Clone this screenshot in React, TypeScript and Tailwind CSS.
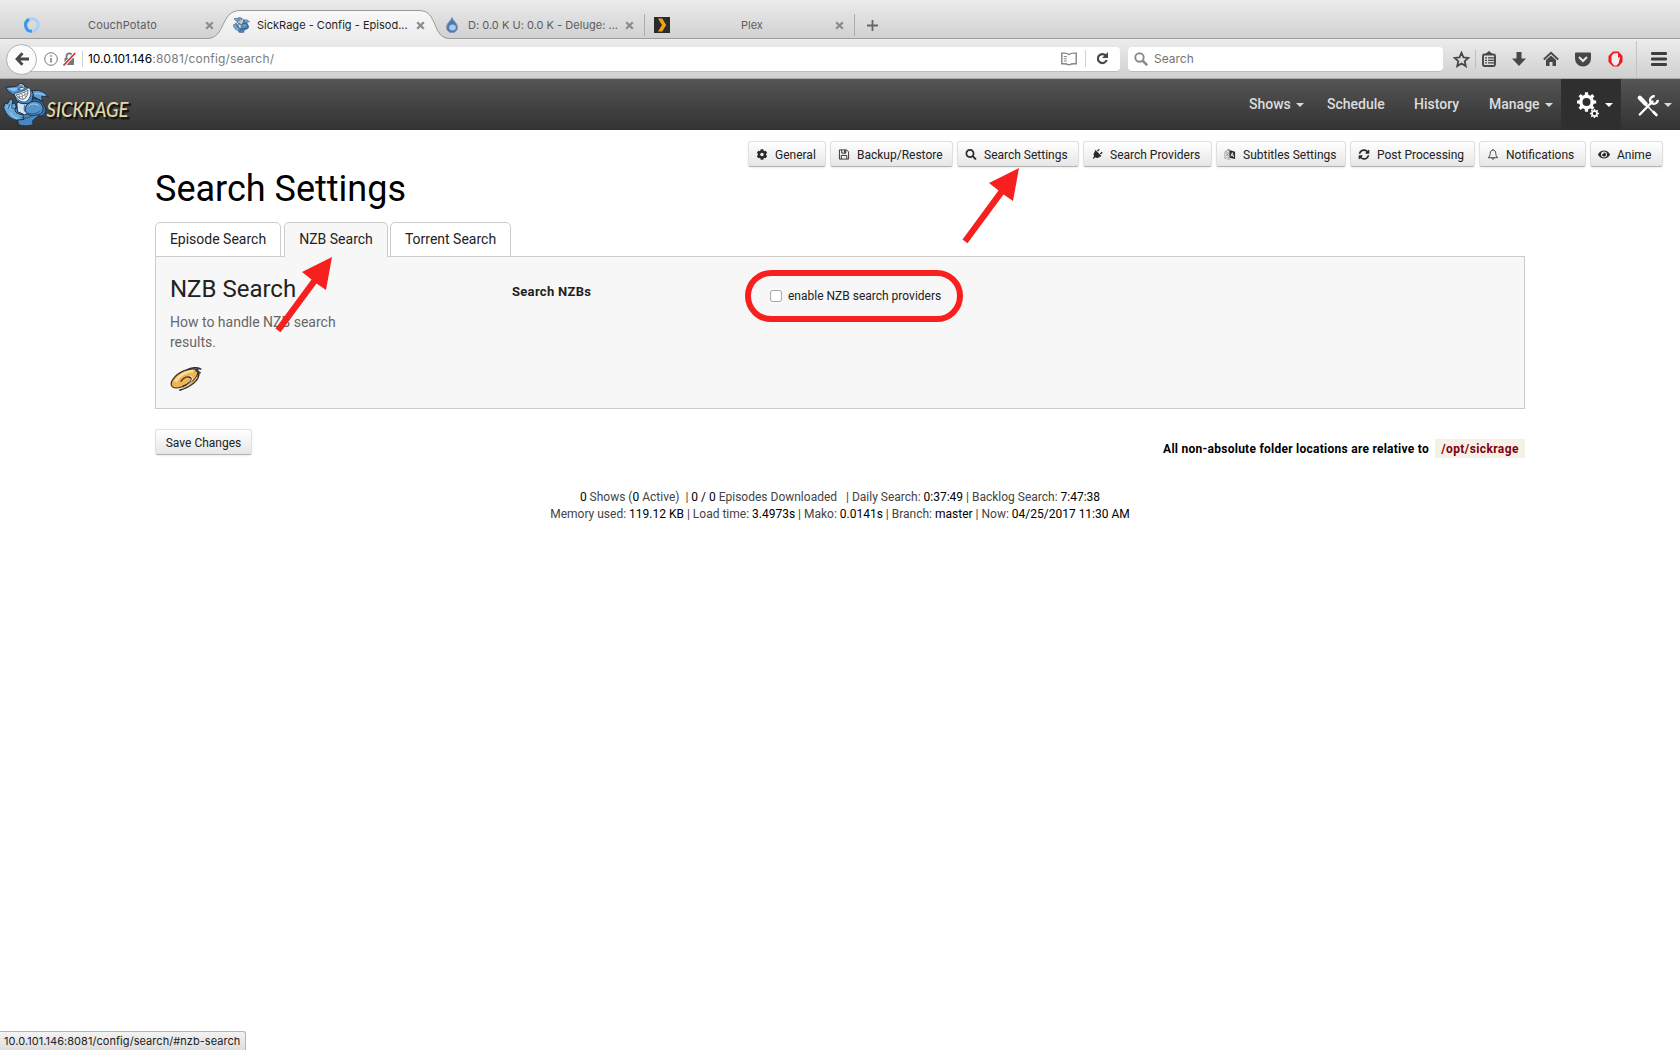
import React from "react";
import { FaCog, FaEye, FaPlug, FaSearch, FaSyncAlt } from "react-icons/fa";

function gearPath(cx: number, cy: number, outer: number, inner: number, hole: number, teeth: number) {
  const pts: string[] = [];
  const step = (Math.PI * 2) / teeth;
  for (let i = 0; i < teeth; i++) {
    const a = i * step - Math.PI / 2;
    const at = (r: number, t: number) =>
      `${(cx + r * Math.cos(t)).toFixed(2)} ${(cy + r * Math.sin(t)).toFixed(2)}`;
    pts.push(at(inner, a - step * 0.3), at(outer, a - step * 0.2), at(outer, a + step * 0.2), at(inner, a + step * 0.3));
  }
  return `M${pts.join("L")}Z M${cx - hole} ${cy}a${hole} ${hole} 0 1 0 ${hole * 2} 0a${hole} ${hole} 0 1 0 ${-hole * 2} 0Z`;
}

function Shark({ className }: { className: string }) {
  return (
    <svg className={className} viewBox="8 17 140 134" fill="none">
      <g stroke="#1a2a42" strokeWidth="3" strokeLinejoin="round">
        {/* tail, back arm and legs */}
        <path fill="#5f9dd0" d="M96 42c16-6 38-2 50 18-8-4-14-4-20-2l2 14-14-6-14-8z" />
        <path fill="#3f76ae" d="M92 66c18-4 34 4 42 20 8 14 4 26-6 30-8 4-18 4-26 2z" />
        <path fill="#4b86be" d="M24 106l26 18 6 20c14 6 30 4 44 0l-2-12 20-16-20-24-40-4z" />
        {/* chest */}
        <path fill="#cde6f4" d="M50 78l36-20 12 16-4 30-20 10-22-10z" />
        {/* front arm */}
        <path fill="#5593c9" d="M80 84c10-16 38-16 48 2 6 16-2 26-16 28-14 4-28 2-34-8-4-8-2-16 2-22z" />
        {/* raised fist */}
        <path fill="#6ba8da" d="M10 92l4-14 8 2 8-14 8 2-2 12 8-2 4 10-4 12c2 8 10 12 24 14l4 14-24 2c-16-4-30-14-38-38z" />
        {/* head */}
        <path fill="#4f8fc8" d="M16 30l30-2 12-8 12 0 4 8c14 4 24 12 26 24l-4 20-12 8-16 0C52 78 46 66 42 54 30 48 20 42 16 30z" />
      </g>
      <path d="M20 33l26-2 16 4-22 8z" fill="#8dc1e8" />
      <path d="M42 49c14-2 32-8 46-18 8 14 4 34-10 43-16 4-30-8-36-25z" fill="#e9f5fb" stroke="#1a2a42" strokeWidth="2" />
      <path d="M48 53c12-2 26-8 36-14 0 12-4 22-12 27-10 2-18-4-24-13z" fill="#fff" stroke="#1a2a42" strokeWidth="2" />
      <path d="M52 60c12 0 22-6 31-13M56 52l4 14M65 49l3 17M74 44l2 17" stroke="#42566e" strokeWidth="1.800" />
      <path d="M52 36l14-6 8 3-8 6z" fill="#f3f7f8" stroke="#1a2a42" strokeWidth="2" />
      <path d="M58 22l10 1 4 8" stroke="#e9d49c" strokeWidth="3" />
      <path d="M86 88c6-8 20-10 30-2M18 90c6-2 12-2 18 2M104 50c12-2 24 0 32 6M30 106c6 10 12 16 24 20" stroke="#a8d4f2" strokeWidth="3" />
      <path d="M84 108c14 6 30 2 38-8M62 122c12 4 24 2 34-6M34 92l10 4M28 82l-4 12M36 80l-2 12M74 84c-2 8-2 14 0 20" stroke="#20466f" strokeWidth="2.500" />
    </svg>
  );
}

function TabClose() {
  return (
    <svg className="h-[9px] w-[9px] shrink-0" viewBox="0 0 9 9">
      <path d="M1.200 1.200l6.600 6.600M7.800 1.200L1.200 7.800" stroke="#8b8b8b" strokeWidth="2.200" />
    </svg>
  );
}

function Caret({ className = "" }: { className?: string }) {
  return <span className={`h-0 w-0 border-x-4 border-t-4 border-x-transparent border-t-[#dcdcdc] ${className}`} />;
}

function TabStrip() {
  return (
    <div className="relative flex h-[39px] border-b border-[#9c9c9c] bg-linear-to-b from-[#ebebeb] to-[#d1d1d1] pt-[10px] text-[11px] text-[#5c5c5c]">
      <div className="flex h-[30px] w-[215px] items-center pl-6">
        <svg className="h-4 w-4" viewBox="0 0 16 16" fill="none">
          <circle cx="8" cy="8" r="6.300" stroke="#a9d0f5" strokeWidth="3" />
          <path d="M8 14.300A6.300 6.300 0 0 1 5 2.400" stroke="#3b97ee" strokeWidth="3" />
        </svg>
        <span className="ml-[48px] w-[117px] tracking-[0.15px]">CouchPotato</span>
        <TabClose />
      </div>
      <div className="relative flex h-[30px] w-[231px] items-center">
        <svg className="absolute -left-2 top-0 h-[30px] w-[246px]" viewBox="0 0 246 30">
          <defs>
            <linearGradient id="activeTab" x1="0" y1="0" x2="0" y2="1">
              <stop offset="0" stopColor="#f8f8f8" />
              <stop offset="1" stopColor="#ececec" />
            </linearGradient>
          </defs>
          <path d="M0 28.5C19 28.5 13 .5 33 .5H212C232 .5 224 28.5 243 28.5V30H0Z" fill="url(#activeTab)" />
          <path d="M0 28.5C19 28.5 13 .5 33 .5H212C232 .5 224 28.5 243 28.5" fill="none" stroke="#999" />
        </svg>
        <Shark className="relative ml-[18px] h-4 w-[17px]" />
        <span className="relative ml-[7px] w-[159px] whitespace-nowrap tracking-[0.02px] text-[#1f1f1f]">
          SickRage - Config - Episod...
        </span>
        <span className="relative flex">
          <TabClose />
        </span>
      </div>
      <div className="flex h-[30px] w-[198px] items-center">
        <svg className="h-4 w-3" viewBox="0 0 12 16">
          <path d="M6 .5C7 4 11.500 6 11.500 10.500a5.500 5.200 0 0 1-11 0C.5 6 5 4 6 .5z" fill="#4d79ae" stroke="#7d99bb" />
          <ellipse cx="6.500" cy="10.500" rx="3.400" ry="3" fill="#a9c9e6" />
        </svg>
        <span className="ml-[10px] w-[157px] whitespace-nowrap tracking-[0.02px]">D: 0.0 K U: 0.0 K - Deluge: ...</span>
        <TabClose />
      </div>
      <div className="mt-[4px] h-[22px] w-px bg-[#acacac]" />
      <div className="flex h-[30px] w-[209px] items-center pl-[9px]">
        <svg className="h-4 w-4" viewBox="0 0 16 16">
          <path fill="#2b2b2b" d="M0 0h16v16H0z" />
          <path fill="#f0a31a" d="M4 1.500h4.200L12.200 8l-4 6.500H4L8 8z" />
        </svg>
        <span className="ml-[71px] w-[94px]">Plex</span>
        <TabClose />
      </div>
      <div className="mt-[4px] h-[22px] w-px bg-[#acacac]" />
      <svg className="ml-[12px] mt-[10px] h-[11px] w-[11px]" viewBox="0 0 11 11">
        <path d="M5.500 0v11M0 5.500h11" stroke="#666" strokeWidth="1.800" />
      </svg>
    </div>
  );
}

function Cell({ w, children }: { w: string; children: React.ReactNode }) {
  return <div className={`flex shrink-0 items-center justify-center ${w}`}>{children}</div>;
}

function AddressBar() {
  return (
    <div className="flex h-10 items-center border-b border-[#a9a9a9] bg-linear-to-b from-[#ececec] to-[#d0d0d0] text-[12px]">
      <div className="relative z-10 ml-[6px] mt-px flex h-[31px] w-[31px] items-center justify-center rounded-full border border-[#b0b0b0] bg-[#fbfbfb]">
        <svg className="h-[14px] w-[14px]" viewBox="0 0 14 14" fill="none" stroke="#474747" strokeWidth="2.800">
          <path d="M7.500 1.200L2 7l5.500 5.800M2.500 7H14" />
        </svg>
      </div>
      <div className="-ml-2 mt-px flex h-[25px] w-[1091px] items-center rounded-r-[4px] border-b border-[#bdbdbd] bg-white">
        <svg className="ml-[15px] h-[14px] w-[14px]" viewBox="0 0 14 14" fill="none" stroke="#777">
          <circle cx="7" cy="7" r="6.300" />
          <path d="M7 6v4.600M7 3.300v1.500" strokeWidth="1.500" />
        </svg>
        <svg className="ml-[5px] h-[14px] w-[13px]" viewBox="0 0 13 14" fill="none">
          <path fill="#777" d="M1.500 6h9.500v7H1.500z" />
          <path d="M3.500 6V4.200a2.700 2.700 0 0 1 5.500 0V6" stroke="#777" strokeWidth="1.700" />
          <path d="M.8 13.400L12.400 1" stroke="#fff" strokeWidth="3.400" />
          <path d="M.5 13.500L12.300 1" stroke="#e0332c" strokeWidth="1.700" />
        </svg>
        <div className="ml-[6px] h-4 w-px bg-[#d0d0d0]" />
        <div className="ml-[5px] whitespace-nowrap pt-px text-[#7b7b7b]">
          <span className="tracking-[-0.05px] text-black">10.0.101.146</span>
          <span className="tracking-[0.2px]">:8081/config/search/</span>
        </div>
        <div className="ml-auto flex items-center">
          <svg className="h-[14px] w-4" viewBox="0 0 16 14" fill="none" stroke="#858585" strokeWidth="1.400">
            <path d="M8 2.500C6 1 3 1 .8 1.200v10.600c2.500-.2 5.200 0 7.200 1.200 2-1.200 4.700-1.400 7.200-1.200V1.200C13 1 10 1 8 2.500z" />
            <path d="M2.800 4.500h3M2.800 6.800h3M2.800 9h3" strokeWidth="1.100" />
          </svg>
          <div className="ml-[8px] h-[17px] w-px bg-[#d0d0d0]" />
          <svg className="ml-[10px] mr-[11px] h-[13px] w-[13px]" viewBox="0 0 13 13" fill="none">
            <path d="M9.600 3.400A4.500 4.500 0 1 0 10.700 8" stroke="#474747" strokeWidth="2.200" />
            <path fill="#474747" d="M12 0v6H6z" />
          </svg>
        </div>
      </div>
      <div className="ml-2 mt-px flex h-[25px] w-[315px] items-center rounded-[4px] border-b border-[#bdbdbd] bg-white">
        <svg className="ml-[6px] h-[14px] w-[14px]" viewBox="0 0 14 14" fill="none" stroke="#8a8a8a">
          <circle cx="5.500" cy="5.500" r="4.200" strokeWidth="1.900" />
          <path d="M8.800 8.800l4.400 4.400" strokeWidth="2.600" />
        </svg>
        <span className="ml-[6px] pt-px text-[#757575]">Search</span>
      </div>
      <div className="flex grow items-center pl-[9px] pt-px">
        <Cell w="w-[18px]">
          <svg className="h-[17px] w-[17px]" viewBox="0 0 17 17" fill="none" stroke="#474747" strokeWidth="1.800">
            <path d="M8.500 1.800l2 4.600 4.900.5-3.700 3.300 1.100 4.900-4.300-2.600-4.300 2.600 1.100-4.900L1.600 6.900l4.900-.5z" />
          </svg>
        </Cell>
        <Cell w="w-[11px]"><span className="h-[18px] w-px bg-[#bdbdbd]" /></Cell>
        <Cell w="w-[16px]">
          <svg className="h-4 w-[14px]" viewBox="0 0 14 16" fill="none" stroke="#474747">
            <rect x="1" y="3.500" width="12" height="11.500" rx="1.500" strokeWidth="1.900" />
            <path d="M4 3l3-2.500L10 3z" fill="#474747" />
            <path d="M3 6.800h2M6 6.800h6M3 9.300h2M6 9.300h6M3 11.800h2M6 11.800h6" strokeWidth="1.200" />
          </svg>
        </Cell>
        <Cell w="w-[44px]">
          <svg className="h-[14px] w-[14px]" viewBox="0 0 14 14" fill="#474747">
            <path d="M4.500 0h5v6.500H14l-7 7.500-7-7.500h4.500z" />
          </svg>
        </Cell>
        <Cell w="w-[20px]">
          <svg className="h-4 w-4" viewBox="0 0 16 16">
            <path d="M.8 8.500L8 1.800l7.200 6.700" fill="none" stroke="#474747" strokeWidth="1.900" />
            <path d="M3 9l5-4.600L13 9v6H9.500v-4h-3v4H3z" fill="#474747" />
          </svg>
        </Cell>
        <Cell w="w-[44px]">
          <svg className="h-[15px] w-4" viewBox="0 0 16 15">
            <path d="M1.500.5h13A1.300 1.300 0 0 1 16 2v4.500a8 8 0 0 1-16 0V2A1.300 1.300 0 0 1 1.500.5z" fill="#474747" />
            <path d="M4 5l4 4 4-4" fill="none" stroke="#e8e8e8" strokeWidth="2" />
          </svg>
        </Cell>
        <Cell w="w-[20px]">
          <svg className="h-4 w-[15px]" viewBox="0 0 15 16">
            <path d="M5 .5h5.500L14.500 5v6l-4 4.500H5L.5 11V5z" fill="#f01822" />
            <path d="M5.500 2.500l4.500-.5v5.500l1-1.500 1 .5-1.500 6-2 2H6L3.500 11V5z" fill="#f3eeee" />
          </svg>
        </Cell>
        <div className="ml-[11px] h-[37px] w-px bg-[#c2c2c2]" />
        <Cell w="w-[43px]">
          <svg className="h-4 w-4" viewBox="0 0 16 16">
            <path d="M1.300 2.500h13.400M1.300 8h13.400M1.300 13.500h13.400" stroke="#3d3d3d" strokeWidth="2.800" strokeLinecap="round" />
          </svg>
        </Cell>
      </div>
    </div>
  );
}

function NavBar() {
  return (
    <header className="flex h-[51px] items-stretch bg-linear-to-b from-[#555] to-[#333] text-[14px] font-medium text-[#dddddd]">
      <div className="flex grow items-center">
        <Shark className="ml-[3px] h-[44px] w-[46px]" />
        <svg className="-ml-[10px] mt-[9px] h-[40px] w-[106px]" viewBox="0 0 106 40">
          <g fontFamily="Lato" fontStyle="italic" fontSize="22">
            <text x="9.500" y="29.500" textLength="82" lengthAdjust="spacingAndGlyphs" fill="#171717" stroke="#171717">
              SICKRAGE
            </text>
            <text x="7.500" y="27.500" textLength="82" lengthAdjust="spacingAndGlyphs" fill="#e2d8a8">
              SICKRAGE
            </text>
          </g>
        </svg>
      </div>
      <div className="flex w-[78px] items-center">Shows<Caret className="ml-[5px]" /></div>
      <div className="flex w-[87px] items-center">Schedule</div>
      <div className="flex w-[75px] items-center">History</div>
      <div className="flex w-[72px] items-center">Manage<Caret className="ml-[5px]" /></div>
      <div className="flex w-[60px] items-center bg-[#2f2f2f] pl-4">
        <svg className="mt-[2px] h-[27px] w-[23px]" viewBox="0 0 23 27" fill="#fff" fillRule="evenodd">
          <path d={gearPath(9.5, 10, 9.8, 7.4, 4, 8)} />
          <path d={gearPath(17.5, 21.5, 4.6, 3.4, 1.7, 8)} />
        </svg>
        <Caret className="ml-[5px] border-t-white" />
      </div>
      <div className="flex w-[59px] items-center pl-4">
        <svg className="mt-[2px] h-[22px] w-[22px]" viewBox="0 0 22 22" fill="none" stroke="#fff">
          <path d="M2.800 2.800l5.700 6" strokeWidth="4.200" strokeLinecap="round" />
          <path d="M8 8.500L19 20" strokeWidth="1.500" />
          <path d="M16.500 17l3 3" strokeWidth="2.600" strokeLinecap="round" />
          <path d="M2.800 19.500L15.500 6.500" strokeWidth="2.400" strokeLinecap="round" />
          <path d="M17.800 1.400a3.800 3.800 0 1 0 2.900 3.500" strokeWidth="2.400" />
        </svg>
        <Caret className="ml-[5px]" />
      </div>
    </header>
  );
}

type IconProps = { className?: string };

function FloppyIcon({ className }: IconProps) {
  return (
    <svg className={className} viewBox="0 0 12 12" fill="none" stroke="currentColor" strokeWidth="1">
      <path d="M1 1h7.800L11 3.200V11H1zM3 11V7h6v4M3.500 1v3.500h4.500V1" />
      <path d="M6 1.500h1.500V4H6z" fill="currentColor" stroke="none" />
    </svg>
  );
}

function PlugIcon({ className }: IconProps) {
  return <FaPlug className={`rotate-45 ${className}`} />;
}

function TranslateIcon({ className }: IconProps) {
  return (
    <svg className={className} viewBox="0 0 12 12" fill="none">
      <path d="M.5 3L5 1v8L.5 10.500z" stroke="#999" />
      <path d="M5.500 1.200L11.500 3v8l-6-1.500z" fill="currentColor" />
      <path d="M7 8l1.500-4L10 9M7.500 6.800l2 .5" stroke="#fff" strokeWidth=".9" />
      <path d="M1.800 4.500l2-.8M2 7.800l2-3M2.200 5l1.800 2.500M3 .8L6 0M3.500 11.300l3-.4" stroke="#777" strokeWidth=".8" />
    </svg>
  );
}

function BellIcon({ className }: IconProps) {
  return (
    <svg className={className} viewBox="0 0 12 12" fill="none" stroke="currentColor" strokeWidth=".9">
      <path d="M6 .2v1M6 1.200c-2 0-3 1.500-3 3.300C3 7 2 8.500.8 9.500h10.400C10 8.500 9 7 9 4.500 9 2.700 8 1.200 6 1.200zM4.800 10a1.200 1.200 0 0 0 2.400 0" />
    </svg>
  );
}

const raised =
  "flex h-[26px] items-center rounded-[3px] border border-[#e0e0e0] border-b-[#b3b3b3] bg-linear-to-b from-white to-[#e6e6e6] pt-px text-[12px] text-[#222] shadow-[0_1px_2px_rgba(0,0,0,0.08)]";

const sections = [
  { label: "General", Icon: FaCog, width: "w-[78px]" },
  { label: "Backup/Restore", Icon: FloppyIcon, width: "w-[123px]" },
  { label: "Search Settings", Icon: FaSearch, width: "w-[122px]" },
  { label: "Search Providers", Icon: PlugIcon, width: "w-[129px]" },
  { label: "Subtitles Settings", Icon: TranslateIcon, width: "w-[130px]" },
  { label: "Post Processing", Icon: FaSyncAlt, width: "w-[125px]" },
  { label: "Notifications", Icon: BellIcon, width: "w-[107px]" },
  { label: "Anime", Icon: FaEye, width: "w-[73px]" },
];

function SectionButtons() {
  return (
    <div className="flex justify-end gap-1 pr-[17px] pt-[11px]">
      {sections.map(({ label, Icon, width }) => (
        <div key={label} className={`${raised} ${width} whitespace-nowrap pl-[7px]`}>
          <Icon className="mr-[7px] h-[11px] w-[12px] shrink-0 text-[#2a2a2a]" />
          {label}
        </div>
      ))}
    </div>
  );
}

function Arrow({ className }: { className: string }) {
  return (
    <svg className={`absolute z-20 h-[78px] w-[60px] ${className}`} viewBox="0 0 60 78" fill="#f7201f">
      <path d="M57 1L27 16l9.500 7.500L.5 72.500l5 3.800L41.500 27.500l9.500 6.500z" />
    </svg>
  );
}

function NewzbinIcon() {
  return (
    <svg className="mt-[15px] h-6 w-8" viewBox="0 0 96 72" fill="none">
      <path d="M84 8C60 0 24 14 8 38-4 58 10 68 34 60 62 52 86 32 84 8z" fill="#eeb552" stroke="#3a2c2c" strokeWidth="3.500" />
      <path d="M70 12C48 12 26 26 16 44" stroke="#f9e09a" strokeWidth="8" />
      <path d="M94 7C82 0 64 2 50 9M76 10l16 8" stroke="#34303a" strokeWidth="4.500" />
      <path d="M86 16c4 22-22 42-58 54" stroke="#34303a" strokeWidth="5" />
      <path d="M82 30c-8 14-26 26-46 34" stroke="#eeb552" strokeWidth="4" />
      <path d="M32 44c8-12 20-18 30-12 8 8-8 20-24 26" stroke="#34303a" strokeWidth="4" />
      <path d="M60 26c14 6 4 20-10 30" stroke="#fff" strokeWidth="2.500" />
    </svg>
  );
}

function Value({ children }: { children: React.ReactNode }) {
  return <span className="text-black">{children}</span>;
}

export default function App() {
  return (
    <div className="relative flex h-[1050px] w-[1680px] flex-col overflow-hidden bg-white font-['Roboto',sans-serif] text-[#222]">
      <div className="font-['Inter',sans-serif]">
        <TabStrip />
        <AddressBar />
      </div>
      <NavBar />
      <SectionButtons />

      <main className="ml-[155px] w-[1370px]">
        <h1 className="mt-px text-[36px] leading-[43px] text-black">Search Settings</h1>
        <div className="relative z-10 mt-[11px] flex h-[35px] text-[14px]">
          <div className="flex w-[126px] justify-center rounded-t-[5px] border border-[#ccc] bg-white pt-[6px]">Episode Search</div>
          <div className="ml-[3px] flex w-[104px] justify-center rounded-t-[5px] border border-b-0 border-[#ccc] bg-[#f7f7f7] pt-[6px]">NZB Search</div>
          <div className="ml-[2px] flex w-[121px] justify-center rounded-t-[5px] border border-[#ccc] bg-white pt-[6px]">Torrent Search</div>
        </div>
        <section className="-mt-px flex h-[153px] border border-[#ccc] bg-[#f7f7f7] pl-[14px]">
          <div className="w-[342px] pt-[18px]">
            <h3 className="text-[24px] leading-[28px]">NZB Search</h3>
            <p className="mt-[9px] w-[190px] text-[14px] leading-5 text-[#666]">How to handle NZB search results.</p>
            <NewzbinIcon />
          </div>
          <div className="w-[233px] pt-[25px] text-[13px] font-bold leading-5 tracking-[0.3px]">Search NZBs</div>
          <div className="mt-[13px] flex h-[52px] w-[218px] items-center rounded-full border-[6px] border-[#f7201f] pl-[19px] text-[12px]">
            <span className="mr-[6px] h-3 w-3 rounded-[3px] border border-[#a6a6a6] bg-white" />
            enable NZB search providers
          </div>
        </section>
        <div className="mt-[20px] flex items-start justify-between">
          <div className={`${raised} w-[97px] justify-center`}>Save Changes</div>
          <div className="mt-[10px] flex h-[19px] items-center text-[12px] font-bold tracking-[0.26px] text-black">
            All non-absolute folder locations are relative to
            <span className="ml-[6px] flex h-[19px] w-[90px] items-center justify-center bg-[#f5f1e4] tracking-[0.4px] text-[#800010]">
              /opt/sickrage
            </span>
          </div>
        </div>
      </main>

      <footer className="mt-[31px] whitespace-pre text-center text-[12px] leading-[17px] text-[#444]">
        <div>
          <Value>0</Value> Shows (<Value>0</Value> Active){"  "}| <Value>0 / 0</Value> Episodes Downloaded{"   "}| Daily Search: <Value>0:37:49</Value> | Backlog Search: <Value>7:47:38</Value>
        </div>
        <div>
          Memory used: <Value>119.12 KB</Value> | Load time: <Value>3.4973s</Value> | Mako: <Value>0.0141s</Value> | Branch: <Value>master</Value> | Now: <Value>04/25/2017 11:30 AM</Value>
        </div>
      </footer>

      <Arrow className="left-[962px] top-[167px]" />
      <Arrow className="left-[275px] top-[256px]" />

      <div className="absolute bottom-0 left-0 flex h-[19px] w-[246px] items-center whitespace-nowrap rounded-tr-[3px] border-r border-t border-[#b5b5b5] bg-linear-to-b from-[#f3f3f3] to-[#dedede] pl-1 font-['Inter',sans-serif] text-[11px] tracking-[0.05px] text-[#222]">
        10.0.101.146:8081/config/search/#nzb-search
      </div>
    </div>
  );
}
